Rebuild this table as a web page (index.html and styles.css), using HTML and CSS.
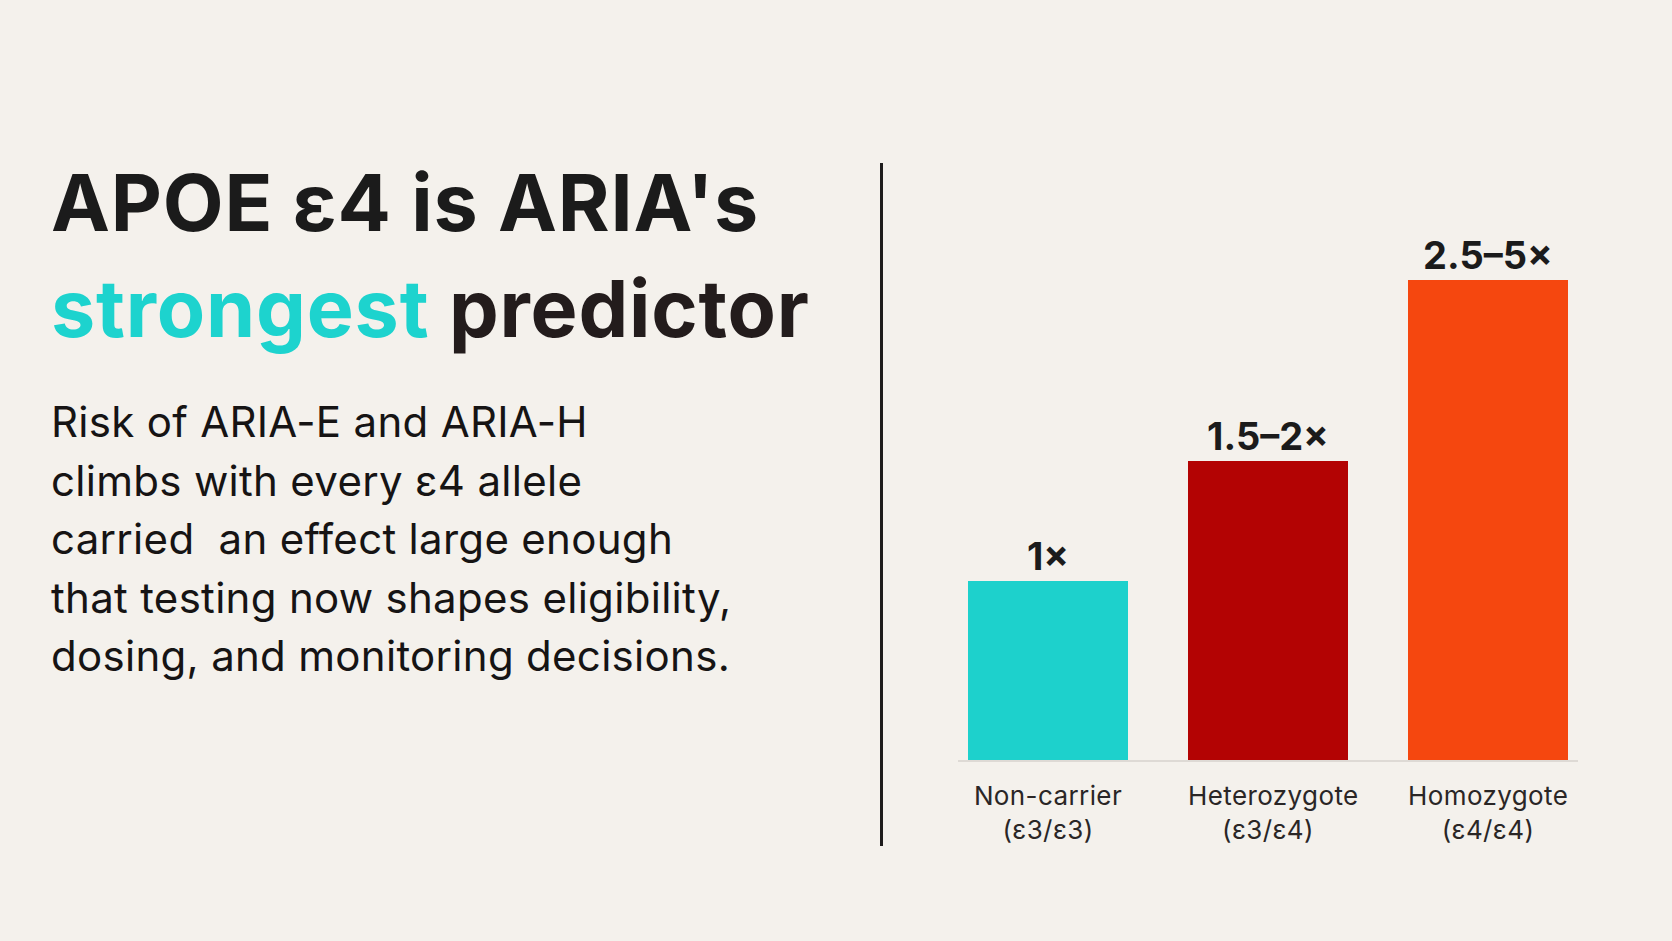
FILE: index.html
```html
<!DOCTYPE html>
<html lang="en">
<head>
<meta charset="utf-8">
<title>APOE ε4 is ARIA's strongest predictor</title>
<link rel="stylesheet" href="styles.css">
</head>
<body>
<main class="slide">
  <section class="intro">
    <h1 class="title">APOE ε4 is ARIA's<br><span class="accent">strongest</span> <span class="dark">predictor</span></h1>
    <p class="lead">Risk of ARIA-E and ARIA-H<br>climbs with every ε4 allele<br>carried&nbsp; an effect large enough<br>that testing now shapes eligibility,<br>dosing, and monitoring decisions.</p>
  </section>
  <div class="divider"></div>
  <section class="chart">
    <div class="bars">
      <div class="col">
        <div class="value">1×</div>
        <div class="bar bar-teal" style="height:179px"></div>
      </div>
      <div class="col">
        <div class="value">1.5–2×</div>
        <div class="bar bar-red" style="height:299px"></div>
      </div>
      <div class="col">
        <div class="value">2.5–5×</div>
        <div class="bar bar-orange" style="height:480px"></div>
      </div>
    </div>
    <div class="axis"></div>
    <div class="labels">
      <div class="label">Non-carrier<br>(ε3/ε3)</div>
      <div class="label">Heterozygote<br>(ε3/ε4)</div>
      <div class="label">Homozygote<br>(ε4/ε4)</div>
    </div>
  </section>
</main>
</body>
</html>
```
FILE: styles.css
```css
html, body {
  margin: 0;
  padding: 0;
}
body {
  background: #f4f1ec;
  font-family: Inter, "Noto Sans", "DejaVu Sans", sans-serif;
  color: #1b1b1b;
}
.slide {
  width: 1672px;
  height: 941px;
  box-sizing: border-box;
  display: flex;
  align-items: flex-start;
  padding: 149px 0 0 51px;
}
.intro {
  width: 829px;
  flex: none;
}
.title {
  margin: 0;
  font-size: 79px;
  line-height: 106px;
  font-weight: 700;
  color: #1b1b1b;
  letter-spacing: 0.8px;
}
.accent { color: #1dd3ce; }
.dark { color: #231c1c; }
.lead {
  margin: 32px 0 0 0;
  font-size: 42px;
  line-height: 58.5px;
  font-weight: 400;
  letter-spacing: 0.3px;
  color: #161414;
}
.divider {
  flex: none;
  width: 3px;
  height: 683px;
  margin-top: 14px;
  background: #1e1c1c;
}
.chart {
  flex: none;
  width: 620px;
  margin: 14px 0 0 75px;
  display: flex;
  flex-direction: column;
}
.bars {
  height: 597px;
  display: flex;
  align-items: flex-end;
  gap: 60px;
  padding: 0 10px;
}
.col {
  width: 160px;
  display: flex;
  flex-direction: column;
  align-items: center;
}
.value {
  font-size: 38px;
  line-height: 38px;
  font-weight: 700;
  color: #1b1b1b;
  margin-bottom: 6px;
}
.bar {
  width: 100%;
}
.bar-teal { background: #1dd1cc; }
.bar-red { background: #b30303; }
.bar-orange { background: #f5470f; }
.axis {
  height: 2px;
  background: #dedad5;
}
.labels {
  display: flex;
  gap: 60px;
  padding: 0 10px;
  margin-top: 17px;
}
.label {
  width: 160px;
  text-align: center;
  font-size: 26px;
  line-height: 34px;
  letter-spacing: 0.4px;
  white-space: nowrap;
  color: #2a2626;
}
```
